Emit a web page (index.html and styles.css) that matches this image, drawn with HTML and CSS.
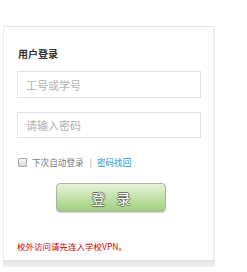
FILE: index.html
```html
<!DOCTYPE html>
<html lang="zh">
<head>
<meta charset="utf-8">
<link rel="stylesheet" href="styles.css">
</head>
<body>
<div class="wrap">
  <div class="panel">
    <div class="title">用户登录</div>
    <input class="field f1" type="text" placeholder="工号或学号">
    <input class="field f2" type="password" placeholder="请输入密码">
    <div class="opts">
      <span class="check"></span>
      <span class="remember">下次自动登录</span>
      <span class="sep">|</span>
      <a class="link">密码找回</a>
    </div>
    <div class="btnrow"><button class="btn">登 录</button></div>
    <div class="note">校外访问请先连入学校VPN。</div>
  </div>
  <div class="shadow"></div>
</div>
</body>
</html>
```
FILE: styles.css
```css
html, body { margin: 0; padding: 0; background: #fff; }
body { font-family: "Noto Sans CJK SC", "Noto Sans", sans-serif; }
.wrap { padding: 26px 0 0 3px; width: 215px; }
.panel {
  width: 212px;
  border-top: 1px solid #e4e4e4;
  border-left: 1px solid #ececec;
  border-right: 2px solid #eeeeee;
  padding: 20px 0 8px 13px;
  box-sizing: border-box;
  display: flex;
  flex-direction: column;
}
.title { font-size: 10px; line-height: 14px; font-weight: bold; color: #333; height: 14px; padding-left: 1px; }
.field {
  display: block;
  box-sizing: border-box;
  width: 184px;
  margin: 0;
  border: 1px solid #e2e2e2;
  padding: 0 0 0 8px;
  font-family: "Noto Sans CJK SC", sans-serif;
  font-size: 11px;
  color: #555;
  outline: none;
  background: #fff;
}
.field::placeholder { color: #b0b0b0; }
.f1 { margin-top: 10px; height: 27px; }
.f2 { margin-top: 14px; height: 26px; }
.opts { margin-top: 17px; height: 14px; display: flex; align-items: center; font-size: 8.6px; color: #777; padding-left: 1px; }
.check { width: 7px; height: 7px; border: 1px solid #aaa; border-radius: 1px; background: linear-gradient(#f4f4f4, #dcdcdc); margin-right: 5px; }
.sep { margin: 0 5px 0 6px; color: #999; }
.link { color: #1a95d2; }
.btnrow { margin-top: 14px; padding-left: 39px; }
.btn {
  width: 110px; height: 29px;
  box-sizing: border-box;
  border: 1px solid #a9b3a1;
  border-radius: 4px;
  background: linear-gradient(#e6f3da, #bfe0a4 55%, #9fcf7c);
  color: #fff;
  font-family: "Noto Sans CJK SC", sans-serif;
  font-size: 14px;
  letter-spacing: 4px;
  padding: 0 0 0 4px;
  text-shadow: 1px 0 0 #6a7a60, -1px 0 0 #6a7a60, 0 1px 0 #6a7a60, 0 -1px 0 #6a7a60;
  box-shadow: 0 1px 1px rgba(0,0,0,0.15);
}
.note { margin-top: 28px; font-size: 8.5px; line-height: 12px; color: #d10000; padding-left: 0; }
.shadow { width: 212px; height: 7px; background: linear-gradient(#e2e2e2, #f2f2f2); }
```
